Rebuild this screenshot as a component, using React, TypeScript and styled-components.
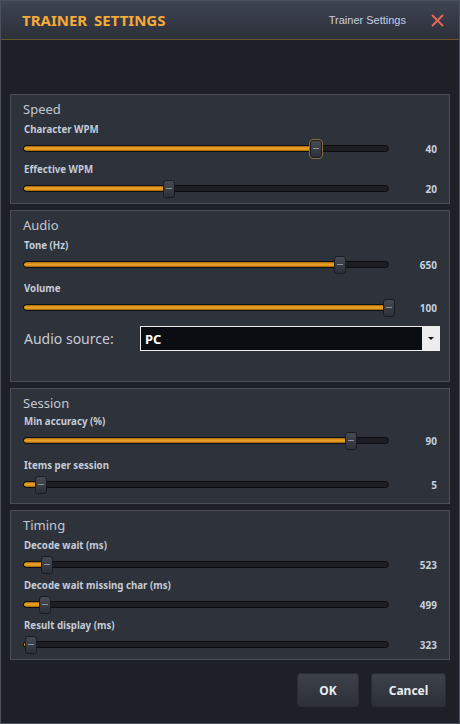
import React from 'react';
import styled, { createGlobalStyle } from 'styled-components';

const GlobalStyle = createGlobalStyle`
  html, body {
    margin: 0;
    padding: 0;
    background: #1e2028;
  }
  body {
    font-family: "Noto Sans", "Open Sans", sans-serif;
  }
`;

const Window = styled.div`
  width: 460px;
  height: 724px;
  box-sizing: border-box;
  border: 1px solid #4d515d;
  background: #1e2028;
  display: flex;
  flex-direction: column;
`;

const TitleBar = styled.div`
  height: 38px;
  flex-shrink: 0;
  display: flex;
  align-items: center;
  padding: 0 15px 0 21px;
  background: linear-gradient(#3f4453, #2c3039);
  border-bottom: 1px solid #6b5529;
`;

const Title = styled.div`
  font-size: 15px;
  font-weight: 700;
  color: #f6aa38;
  letter-spacing: 0;
  word-spacing: 3px;
  flex: 1;
`;

const SubTitle = styled.div`
  font-family: "Liberation Sans", Arial, sans-serif;
  font-size: 11px;
  color: #c6cee0;
  margin-right: 25px;
`;

const CloseIcon = styled.svg`
  width: 13px;
  height: 13px;
  display: block;
`;

const Body = styled.div`
  flex: 1;
  display: flex;
  flex-direction: column;
  gap: 6px;
  padding: 54px 9px 0;
`;

const Group = styled.div<{ $gap: number; $padBottom: number }>`
  background: #2e323b;
  border: 1px solid #4b4f5a;
  padding: 5px 12px ${(p) => p.$padBottom}px;
  display: flex;
  flex-direction: column;
  gap: ${(p) => p.$gap}px;
`;

const GroupTitle = styled.div<{ $gap: number }>`
  font-size: 13px;
  line-height: 18px;
  color: #c3c7d0;
  margin-bottom: ${(p) => p.$gap}px;
`;

const Item = styled.div`
  display: flex;
  flex-direction: column;
`;

const Label = styled.div`
  font-size: 9.7px;
  font-weight: 700;
  line-height: 14px;
  color: #c4ccd8;
  padding-left: 1px;
`;

const SliderRow = styled.div`
  height: 23px;
  display: flex;
  align-items: center;
`;

const TrackArea = styled.div`
  position: relative;
  flex: 1;
  height: 23px;
  display: flex;
  align-items: center;
`;

const Track = styled.div`
  position: relative;
  width: 100%;
  height: 7px;
  box-sizing: border-box;
  border: 1px solid #0c0d10;
  border-radius: 4px;
  background: #1c1e24;
  overflow: hidden;
`;

const Fill = styled.div`
  height: 100%;
  border-radius: 3px 0 0 3px;
  background: linear-gradient(#a4680f, #f2a526 45%, #e39a1c 65%, #9c600c);
`;

const Thumb = styled.div<{ $focused?: boolean }>`
  position: absolute;
  top: 50%;
  width: 12px;
  height: 18px;
  box-sizing: border-box;
  transform: translate(-50%, -50%);
  border: 1px solid #1a1c21;
  border-radius: 3px;
  background: linear-gradient(#454a55, #2c3038);
  display: flex;
  align-items: center;
  justify-content: center;
  outline: ${(p) => (p.$focused ? '1px solid #8a6d37' : 'none')};

  &::after {
    content: '';
    width: 6px;
    height: 1px;
    background: #8c929e;
  }
`;

const Value = styled.div`
  width: 48px;
  text-align: right;
  font-size: 10px;
  font-weight: 700;
  color: #c6d0de;
`;

const SourceRow = styled.div`
  display: flex;
  align-items: center;
  margin-top: 1px;
  height: 25px;
`;

const SourceLabel = styled.div`
  width: 117px;
  flex-shrink: 0;
  font-size: 14px;
  color: #c8ccd4;
  padding-left: 1px;
  box-sizing: border-box;
`;

const Combo = styled.div`
  width: 300px;
  flex-shrink: 0;
  height: 25px;
  box-sizing: border-box;
  border: 1px solid #ececec;
  background: #0a0d12;
  display: flex;
  align-items: stretch;
`;

const ComboText = styled.div`
  flex: 1;
  display: flex;
  align-items: center;
  padding-left: 4px;
  font-size: 13px;
  font-weight: 700;
  color: #ffffff;
`;

const ComboButton = styled.div`
  width: 17px;
  background: #ededed;
  display: flex;
  align-items: center;
  justify-content: center;

  &::after {
    content: '';
    border-left: 3px solid transparent;
    border-right: 3px solid transparent;
    border-top: 3px solid #111;
  }
`;

const Footer = styled.div`
  display: flex;
  justify-content: flex-end;
  gap: 12px;
  margin-top: 7px;
  padding-right: 4px;
`;

const Button = styled.button<{ $width: number }>`
  width: ${(p) => p.$width}px;
  height: 34px;
  border: 1px solid #2a2d33;
  border-radius: 3px;
  background: linear-gradient(#3d414a, #2d3038);
  color: #e8ecf3;
  font-family: inherit;
  font-size: 12px;
  font-weight: 700;
  padding: 0;
  cursor: pointer;
`;

type SliderProps = {
  label: string;
  value: number;
  pos: number;
  focused?: boolean;
};

const Slider: React.FC<SliderProps> = ({ label, value, pos, focused }) => (
  <Item>
    <Label>{label}</Label>
    <SliderRow>
      <TrackArea>
        <Track>
          <Fill style={{ width: `${pos * 100}%` }} />
        </Track>
        <Thumb $focused={focused} style={{ left: `${pos * 100}%` }} />
      </TrackArea>
      <Value>{value}</Value>
    </SliderRow>
  </Item>
);

const App: React.FC = () => {
  return (
    <>
      <GlobalStyle />
      <Window>
        <TitleBar>
          <Title>TRAINER SETTINGS</Title>
          <SubTitle>Trainer Settings</SubTitle>
          <CloseIcon viewBox="0 0 13 13">
            <path d="M1 1 L12 12 M12 1 L1 12" stroke="#e8665c" strokeWidth="1.8" />
          </CloseIcon>
        </TitleBar>
        <Body>
          <Group $gap={3} $padBottom={3}>
            <GroupTitle $gap={2}>Speed</GroupTitle>
            <Slider label="Character WPM" value={40} pos={0.8} focused />
            <Slider label="Effective WPM" value={20} pos={0.398} />
          </Group>
          <Group $gap={6} $padBottom={30}>
            <GroupTitle $gap={-1}>Audio</GroupTitle>
            <Slider label="Tone (Hz)" value={650} pos={0.865} />
            <Slider label="Volume" value={100} pos={1} />
            <SourceRow>
              <SourceLabel>Audio source:</SourceLabel>
              <Combo>
                <ComboText>PC</ComboText>
                <ComboButton />
              </Combo>
            </SourceRow>
          </Group>
          <Group $gap={7} $padBottom={7}>
            <GroupTitle $gap={-4}>Session</GroupTitle>
            <Slider label="Min accuracy (%)" value={90} pos={0.897} />
            <Slider label="Items per session" value={5} pos={0.048} />
          </Group>
          <Group $gap={3} $padBottom={3}>
            <GroupTitle $gap={2}>Timing</GroupTitle>
            <Slider label="Decode wait (ms)" value={523} pos={0.066} />
            <Slider label="Decode wait missing char (ms)" value={499} pos={0.061} />
            <Slider label="Result display (ms)" value={323} pos={0.023} />
          </Group>
          <Footer>
            <Button $width={62}>OK</Button>
            <Button $width={75}>Cancel</Button>
          </Footer>
        </Body>
      </Window>
    </>
  );
};

export default App;
